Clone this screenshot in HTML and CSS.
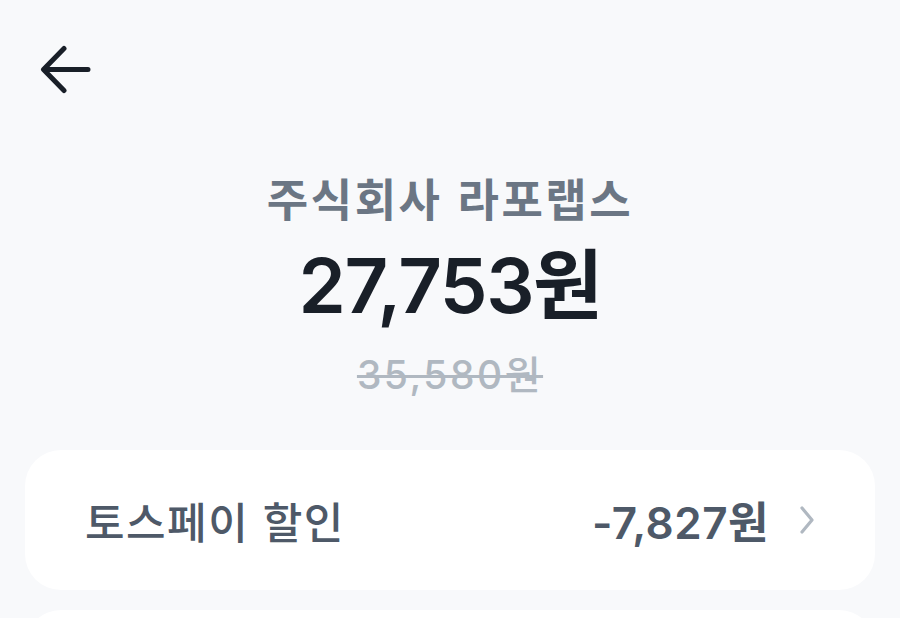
FILE: index.html
```html
<!DOCTYPE html>
<html lang="ko">
<head>
	<meta charset="UTF-8">
	<title>결제</title>
	<link rel="stylesheet" href="styles.css">
</head>
<body>
	<div id="page">
		<div class="top">
			<span class="back">
				<svg width="54" height="50" viewBox="0 0 54 50">
					<path d="M48 24.5H4M24 3.5L3.5 24.5L24 45.5" fill="none" stroke="#191f28" stroke-width="5" stroke-linecap="round" stroke-linejoin="round"/>
				</svg>
			</span>
		</div>
		<div class="summary">
			<p class="shop">주식회사 라포랩스</p>
			<p class="price">27,753원</p>
			<p class="origin">35,580원</p>
		</div>
		<ul class="list">
			<li class="row">
				<span class="label">토스페이 할인</span>
				<span class="value">-7,827원</span>
				<svg class="arrow" width="16" height="30" viewBox="0 0 16 30">
					<path d="M3 3L13 15L3 27" fill="none" stroke="#b0b8c1" stroke-width="3.2" stroke-linecap="round" stroke-linejoin="round"/>
				</svg>
			</li>
			<li class="row"></li>
		</ul>
	</div>
</body>
</html>
```

FILE: styles.css
```css
*{
	margin: 0;
	padding: 0;
}
ul{
	list-style-type: none;
}
body{
	background: #f8f9fb;
	font-family: "Noto Sans CJK KR", "Noto Sans", sans-serif;
	color: #191f28;
}
#page{
	width: 900px;
	height: 618px;
	overflow: hidden;
}
.top{
	height: 170px;
	padding: 45px 0 0 40px;
	box-sizing: border-box;
}
.back{
	display: block;
	width: 54px;
	height: 50px;
}
.summary{
	display: flex;
	flex-direction: column;
	align-items: center;
}
.shop{
	font-size: 45px;
	line-height: 56px;
	font-weight: 600;
	color: #6b7684;
	letter-spacing: 2.5px;
}
/* 숫자는 Inter, 한글은 Noto */
.price, .origin, .value{
	font-family: Inter, "Noto Sans CJK KR", sans-serif;
}
.price{
	margin-top: 19px;
	font-size: 76px;
	line-height: 80px;
	font-weight: 600;
	letter-spacing: -1.5px;
}
.origin{
	margin-top: 25px;
	font-size: 39px;
	line-height: 50px;
	font-weight: 500;
	color: #b0b8c1;
	letter-spacing: 2.5px;
	text-decoration: line-through;
	text-decoration-thickness: 3px;
}
.list{
	margin-top: 50px;
	padding: 0 25px;
	display: flex;
	flex-direction: column;
	gap: 20px;
}
.row{
	height: 140px;
	background: #fff;
	border-radius: 36px;
	display: flex;
	align-items: center;
	padding: 0 60px;
}
.label{
	flex: 1;
	font-size: 43px;
	font-weight: 500;
	color: #4e5968;
	letter-spacing: 1.5px;
}
.value{
	font-size: 44px;
	font-weight: 600;
	color: #4e5968;
	letter-spacing: 0.5px;
}
.arrow{
	margin-left: 30px;
}
```
